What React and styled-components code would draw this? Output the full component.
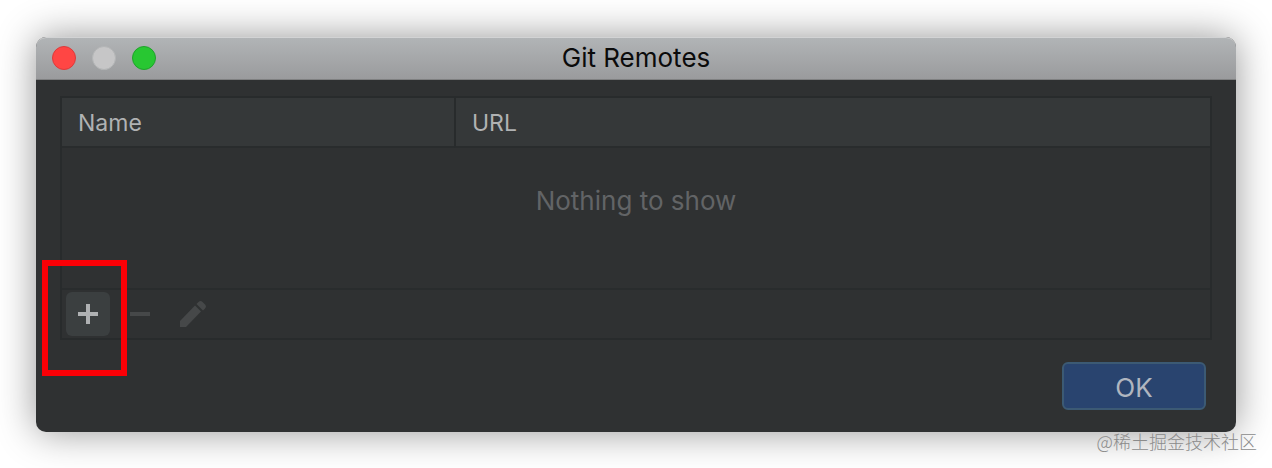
import React from 'react';
import styled, { createGlobalStyle } from 'styled-components';

const GlobalStyle = createGlobalStyle`
    * {
        box-sizing: border-box;
    }
    body {
        margin: 0;
        background: #fff;
        font-family: Inter, "Liberation Sans", "Noto Sans CJK SC", sans-serif;
    }
`

const lights = [
    { label: 'Close', color: '#ff4644', edge: '#dc3b3b' },
    { label: 'Minimize', color: '#c6c6c7', edge: '#b3b5b6' },
    { label: 'Zoom', color: '#28c732', edge: '#1fa32b' },
];

const PlusIcon = () => (
    <svg width="20" height="20" viewBox="0 0 20 20" fill="currentColor" aria-hidden="true">
        <path d="M8 0h4v8h8v4h-8v8H8v-8H0V8h8z" />
    </svg>
);

const MinusIcon = () => (
    <svg width="20" height="20" viewBox="0 0 20 20" fill="currentColor" aria-hidden="true">
        <path d="M0 8h20v4H0z" />
    </svg>
);

const PencilIcon = () => (
    <svg width="28" height="28" viewBox="0 0 28 28" fill="currentColor" aria-hidden="true">
        <path d="M17 5.500l6 6L8 27H2v-6z" />
        <path d="M18.500 4l2-2a3 3 0 0 1 4 0l2.500 2.500a3 3 0 0 1 0 4l-2 2z" />
    </svg>
);

class App extends React.Component {
    render() {
        return (
            <Desktop>
                <GlobalStyle />
                <Dialog role="dialog" aria-labelledby="dialog-title">
                    <TitleBar>
                        <Lights>
                            {lights.map(({ label, color, edge }) => (
                                <Light key={label} type="button" aria-label={label} $color={color} $edge={edge} />
                            ))}
                        </Lights>
                        <Title id="dialog-title">Git Remotes</Title>
                    </TitleBar>
                    <Content>
                        <Panel>
                            <Table>
                                <thead>
                                    <tr>
                                        <HeadCell $width="392px">Name</HeadCell>
                                        <HeadCell>URL</HeadCell>
                                    </tr>
                                </thead>
                                <tbody>
                                    <tr>
                                        <EmptyCell colSpan={2}>Nothing to show</EmptyCell>
                                    </tr>
                                </tbody>
                            </Table>
                            <Toolbar>
                                <Highlighted>
                                    <ToolButton type="button" aria-label="Add" $active>
                                        <PlusIcon />
                                    </ToolButton>
                                </Highlighted>
                                <ToolButton type="button" aria-label="Remove" disabled>
                                    <MinusIcon />
                                </ToolButton>
                                <ToolButton type="button" aria-label="Edit" disabled>
                                    <PencilIcon />
                                </ToolButton>
                            </Toolbar>
                        </Panel>
                        <Footer>
                            <OkButton type="button">OK</OkButton>
                        </Footer>
                    </Content>
                </Dialog>
                <Watermark>@稀土掘金技术社区</Watermark>
            </Desktop>
        )
    }
}

const Desktop = styled.main`
    position: relative;
    padding: 37px 36px 36px;
    overflow: hidden;
`

const Dialog = styled.section`
    border-radius: 10px;
    background: #2f3132;
    box-shadow: 0 0 38px rgba(0, 0, 0, 0.42);
`

const TitleBar = styled.header`
    display: grid;
    grid-template-columns: 1fr auto 1fr;
    align-items: center;
    height: 43px;
    padding: 0 16px 1px;
    border-top: 1px solid #d2d3d4;
    border-bottom: 1px solid #7f8081;
    border-radius: 10px 10px 0 0;
    background: linear-gradient(#b1b4b6, #9a9b9d);
`

const Lights = styled.div`
    display: flex;
    gap: 16px;
`

const Light = styled.button`
    width: 24px;
    height: 24px;
    padding: 0;
    border: 1px solid ${({ $edge }) => $edge};
    border-radius: 50%;
    background: ${({ $color }) => $color};
`

const Title = styled.h1`
    margin: 0;
    color: #0b0b0b;
    font-size: 26px;
    font-weight: 400;
    line-height: 32px;
`

const Content = styled.div`
    padding: 16px 24px 22px;
`

const Panel = styled.div`
    border: 2px solid #282b2c;
`

const Table = styled.table`
    width: 100%;
    border-spacing: 0;
    table-layout: fixed;
`

const HeadCell = styled.th`
    width: ${({ $width }) => $width || 'auto'};
    height: 50px;
    padding: 2px 16px 0;
    border-bottom: 2px solid #292c2d;
    background: #353839;
    color: #b0b2b3;
    font-size: 23px;
    font-weight: 400;
    text-align: left;
    & + & {
        border-left: 2px solid #282b2c;
    }
`

const EmptyCell = styled.td`
    height: 140px;
    padding: 35px 0 0;
    color: #626466;
    font-size: 26px;
    line-height: 36px;
    text-align: center;
    vertical-align: top;
`

const Toolbar = styled.div`
    display: flex;
    align-items: center;
    gap: 8px;
    height: 50px;
    padding: 0 4px;
    border-top: 2px solid #292c2d;
`

const ToolButton = styled.button`
    display: flex;
    align-items: center;
    justify-content: center;
    width: 44px;
    height: 44px;
    padding: 0;
    border: 0;
    border-radius: 6px;
    background: ${({ $active }) => ($active ? '#3b3f40' : 'transparent')};
    color: #afb1b3;
    &:disabled {
        color: #464849;
    }
`

/* red frame drawn over the dialog, around the button it wraps */
const Highlighted = styled.div`
    position: relative;
    &::after {
        content: '';
        position: absolute;
        top: -32px;
        right: -17px;
        bottom: -40px;
        left: -24px;
        border: 6px solid #fb0006;
        pointer-events: none;
    }
`

const Footer = styled.footer`
    display: flex;
    justify-content: flex-end;
    padding: 22px 6px 0;
`

const OkButton = styled.button`
    min-width: 144px;
    height: 48px;
    padding: 2px 16px 0;
    border: 2px solid #3c5a74;
    border-radius: 6px;
    background: #29446f;
    color: #b0b6bf;
    font-family: inherit;
    font-size: 26px;
`

const Watermark = styled.span`
    position: absolute;
    right: 15px;
    bottom: 15px;
    color: #8b8b8b;
    font-family: "Noto Sans CJK SC", sans-serif;
    font-size: 18px;
    font-weight: 300;
    line-height: 24px;
`

export default App;
